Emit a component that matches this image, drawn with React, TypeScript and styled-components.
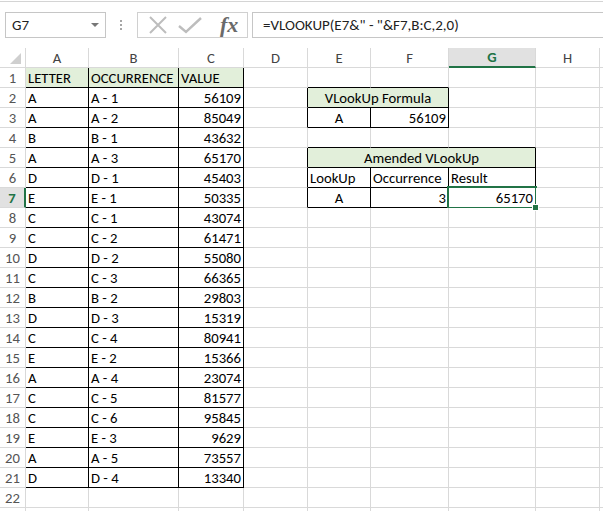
import styled, { createGlobalStyle, css } from 'styled-components'

const GlobalStyle = createGlobalStyle`
  html, body {
    margin: 0;
    padding: 0;
    background: #fff;
  }
  body {
    font-family: Carlito, Lato, "Open Sans", sans-serif;
  }
`

const GREEN = '#217346'
const GRID = '#d9d9d9'

const Window = styled.div`
  width: 603px;
  height: 511px;
  overflow: hidden;
  background: #fff;
  display: flex;
  flex-direction: column;
`

/* formula bar strip */
const Toolbar = styled.div`
  flex-shrink: 0;
  margin-top: 1px;
  border-top: 1px solid #d4d4d4;
  height: 47px;
  padding-top: 10px;
  box-sizing: border-box;
  display: flex;
  align-items: flex-start;
`

const NameBox = styled.div`
  margin-left: 5px;
  width: 101px;
  height: 26px;
  box-sizing: border-box;
  border: 1px solid #c6c6c6;
  display: flex;
  align-items: center;
  justify-content: space-between;
  padding: 0 6px 0 6px;
  font-size: 15px;
  color: #222;
`

const DropArrow = styled.span`
  width: 0;
  height: 0;
  border-left: 4px solid transparent;
  border-right: 4px solid transparent;
  border-top: 4px solid #777;
`

const Grip = styled.div`
  margin-left: 14px;
  width: 3px;
  height: 26px;
  display: flex;
  flex-direction: column;
  justify-content: center;
  gap: 2px;

  span {
    width: 2px;
    height: 2px;
    background: #a6a6a6;
  }
`

const ButtonBox = styled.div`
  margin-left: 14px;
  width: 111px;
  height: 26px;
  box-sizing: border-box;
  border: 1px solid #d0d0d0;
  display: flex;
  align-items: center;
  padding-left: 8px;
  gap: 8px;
`

const IconSlot = styled.span`
  width: 24px;
  height: 24px;
  display: flex;
  align-items: center;
  justify-content: center;
`

const FxLabel = styled.span`
  margin-left: 10px;
  font-family: "Liberation Serif", serif;
  font-style: italic;
  font-weight: bold;
  font-size: 22px;
  color: #6a6a6a;
  line-height: 24px;
`

const FormulaInput = styled.div`
  margin-left: 4px;
  flex: 1;
  height: 26px;
  box-sizing: border-box;
  border: 1px solid #c6c6c6;
  border-right: none;
  display: flex;
  align-items: center;
  padding-left: 10px;
  font-size: 15px;
  color: #222;
  white-space: pre;
`

/* sheet */
const Sheet = styled.div`
  flex-shrink: 0;
  display: grid;
  grid-template-columns: 26px 63px 90px 65px 64px 63px 78px 87px 64px 64px;
  grid-auto-rows: 20px;
  font-size: 14.7px;
`

const Corner = styled.div`
  border-right: 1px solid ${GRID};
  border-bottom: 1px solid ${GRID};
  position: relative;

  &::after {
    content: '';
    position: absolute;
    right: 4px;
    bottom: 3px;
    width: 0;
    height: 0;
    border-left: 11px solid transparent;
    border-bottom: 11px solid #cfcfcf;
  }
`

const ColHead = styled.div<{ $active?: boolean }>`
  box-sizing: border-box;
  border-right: 1px solid ${GRID};
  border-bottom: 1px solid ${GRID};
  display: flex;
  align-items: center;
  justify-content: center;
  color: #444;
  ${(p) =>
    p.$active &&
    css`
      background: #e1e1e1;
      color: ${GREEN};
      font-weight: bold;
      border-bottom: 2px solid ${GREEN};
    `}
`

const RowHead = styled.div<{ $active?: boolean }>`
  box-sizing: border-box;
  border-right: 1px solid ${GRID};
  border-bottom: 1px solid ${GRID};
  display: flex;
  align-items: center;
  justify-content: center;
  color: #555;
  ${(p) =>
    p.$active &&
    css`
      background: #e1e1e1;
      color: ${GREEN};
      font-weight: bold;
      border-right: 2px solid ${GREEN};
    `}
`

const Cell = styled.div<{
  $span: number
  $align: 'left' | 'center' | 'right'
  $fill?: boolean
  $darkRight?: boolean
  $darkBottom?: boolean
  $selected?: boolean
}>`
  grid-column: span ${(p) => p.$span};
  box-sizing: border-box;
  position: relative;
  border-right: 1px solid ${(p) => (p.$darkRight ? '#000' : GRID)};
  border-bottom: 1px solid ${(p) => (p.$darkBottom ? '#000' : GRID)};
  background: ${(p) => (p.$fill ? '#e2efda' : '#fff')};
  padding: 0 2px;
  display: flex;
  align-items: center;
  justify-content: ${(p) =>
    p.$align === 'left' ? 'flex-start' : p.$align === 'right' ? 'flex-end' : 'center'};
  white-space: nowrap;
  color: #000;

  ${(p) =>
    p.$selected &&
    css`
      &::after {
        content: '';
        position: absolute;
        left: -2px;
        top: -2px;
        right: -2px;
        bottom: -2px;
        border: 2px solid ${GREEN};
        pointer-events: none;
      }
      &::before {
        content: '';
        position: absolute;
        right: -4px;
        bottom: -4px;
        width: 5px;
        height: 5px;
        background: ${GREEN};
        border: 1px solid #fff;
        z-index: 1;
      }
    `}
`

type Align = 'left' | 'center' | 'right'
type CellDef = { text: string; align?: Align; fill?: boolean; span?: number }

const COLS = ['A', 'B', 'C', 'D', 'E', 'F', 'G', 'H', 'I']
const ROW_COUNT = 23

const DATA: [string, string, number][] = [
  ['A', 'A - 1', 56109],
  ['A', 'A - 2', 85049],
  ['B', 'B - 1', 43632],
  ['A', 'A - 3', 65170],
  ['D', 'D - 1', 45403],
  ['E', 'E - 1', 50335],
  ['C', 'C - 1', 43074],
  ['C', 'C - 2', 61471],
  ['D', 'D - 2', 55080],
  ['C', 'C - 3', 66365],
  ['B', 'B - 2', 29803],
  ['D', 'D - 3', 15319],
  ['C', 'C - 4', 80941],
  ['E', 'E - 2', 15366],
  ['A', 'A - 4', 23074],
  ['C', 'C - 5', 81577],
  ['C', 'C - 6', 95845],
  ['E', 'E - 3', 9629],
  ['A', 'A - 5', 73557],
  ['D', 'D - 4', 13340],
]

// cell contents keyed "row:colIndex"
const cells: Record<string, CellDef> = {
  '1:0': { text: 'LETTER', align: 'left', fill: true },
  '1:1': { text: 'OCCURRENCE', align: 'left', fill: true },
  '1:2': { text: 'VALUE', align: 'left', fill: true },
  '2:4': { text: 'VLookUp Formula', align: 'center', fill: true, span: 2 },
  '3:4': { text: 'A', align: 'center' },
  '3:5': { text: '56109', align: 'right' },
  '5:4': { text: 'Amended VLookUp', align: 'center', fill: true, span: 3 },
  '6:4': { text: 'LookUp', align: 'left' },
  '6:5': { text: 'Occurrence', align: 'left' },
  '6:6': { text: 'Result', align: 'left' },
  '7:4': { text: 'A', align: 'center' },
  '7:5': { text: '3', align: 'right' },
  '7:6': { text: '65170', align: 'right' },
}
DATA.forEach(([letter, occ, value], i) => {
  const r = i + 2
  cells[`${r}:0`] = { text: letter, align: 'left' }
  cells[`${r}:1`] = { text: occ, align: 'left' }
  cells[`${r}:2`] = { text: String(value), align: 'right' }
})

// bordered ranges: [rowFrom, rowTo, colFrom, colTo]
const TABLES: [number, number, number, number][] = [
  [1, 21, 0, 2],
  [2, 3, 4, 5],
  [5, 7, 4, 6],
]

function inTable(r: number, c: number) {
  return TABLES.some(([r1, r2, c1, c2]) => r >= r1 && r <= r2 && c >= c1 && c <= c2)
}

const SELECTED_ROW = 7
const SELECTED_COL = 6

function ToolbarIcons() {
  return (
    <ButtonBox>
      <IconSlot>
        <svg width="18" height="18" viewBox="0 0 18 18">
          <path d="M1 1 L17 17 M17 1 L1 17" stroke="#bdbdbd" strokeWidth="2" fill="none" />
        </svg>
      </IconSlot>
      <IconSlot>
        <svg width="24" height="18" viewBox="0 0 24 18">
          <path d="M1 10 L8 16 L23 2" stroke="#bdbdbd" strokeWidth="2.4" fill="none" />
        </svg>
      </IconSlot>
      <FxLabel>fx</FxLabel>
    </ButtonBox>
  )
}

function SheetGrid() {
  const nodes: JSX.Element[] = []
  nodes.push(<Corner key="corner" />)
  COLS.forEach((c, i) => {
    nodes.push(
      <ColHead key={`h${c}`} $active={i === SELECTED_COL}>
        {c}
      </ColHead>
    )
  })
  for (let r = 1; r <= ROW_COUNT; r++) {
    nodes.push(
      <RowHead key={`r${r}`} $active={r === SELECTED_ROW}>
        {r}
      </RowHead>
    )
    let c = 0
    while (c < COLS.length) {
      const def = cells[`${r}:${c}`]
      const span = def?.span ?? 1
      const last = c + span - 1
      const dark = inTable(r, c)
      nodes.push(
        <Cell
          key={`${r}:${c}`}
          $span={span}
          $align={def?.align ?? 'left'}
          $fill={def?.fill}
          $darkRight={dark || inTable(r, last + 1)}
          $darkBottom={dark || inTable(r + 1, c)}
          $selected={r === SELECTED_ROW && c === SELECTED_COL}
        >
          {def?.text}
        </Cell>
      )
      c += span
    }
  }
  return <Sheet>{nodes}</Sheet>
}

export default function App() {
  return (
    <>
      <GlobalStyle />
      <Window>
        <Toolbar>
          <NameBox>
            G7
            <DropArrow />
          </NameBox>
          <Grip>
            <span />
            <span />
            <span />
          </Grip>
          <ToolbarIcons />
          <FormulaInput>{'=VLOOKUP(E7&" - "&F7,B:C,2,0)'}</FormulaInput>
        </Toolbar>
        <SheetGrid />
      </Window>
    </>
  )
}
